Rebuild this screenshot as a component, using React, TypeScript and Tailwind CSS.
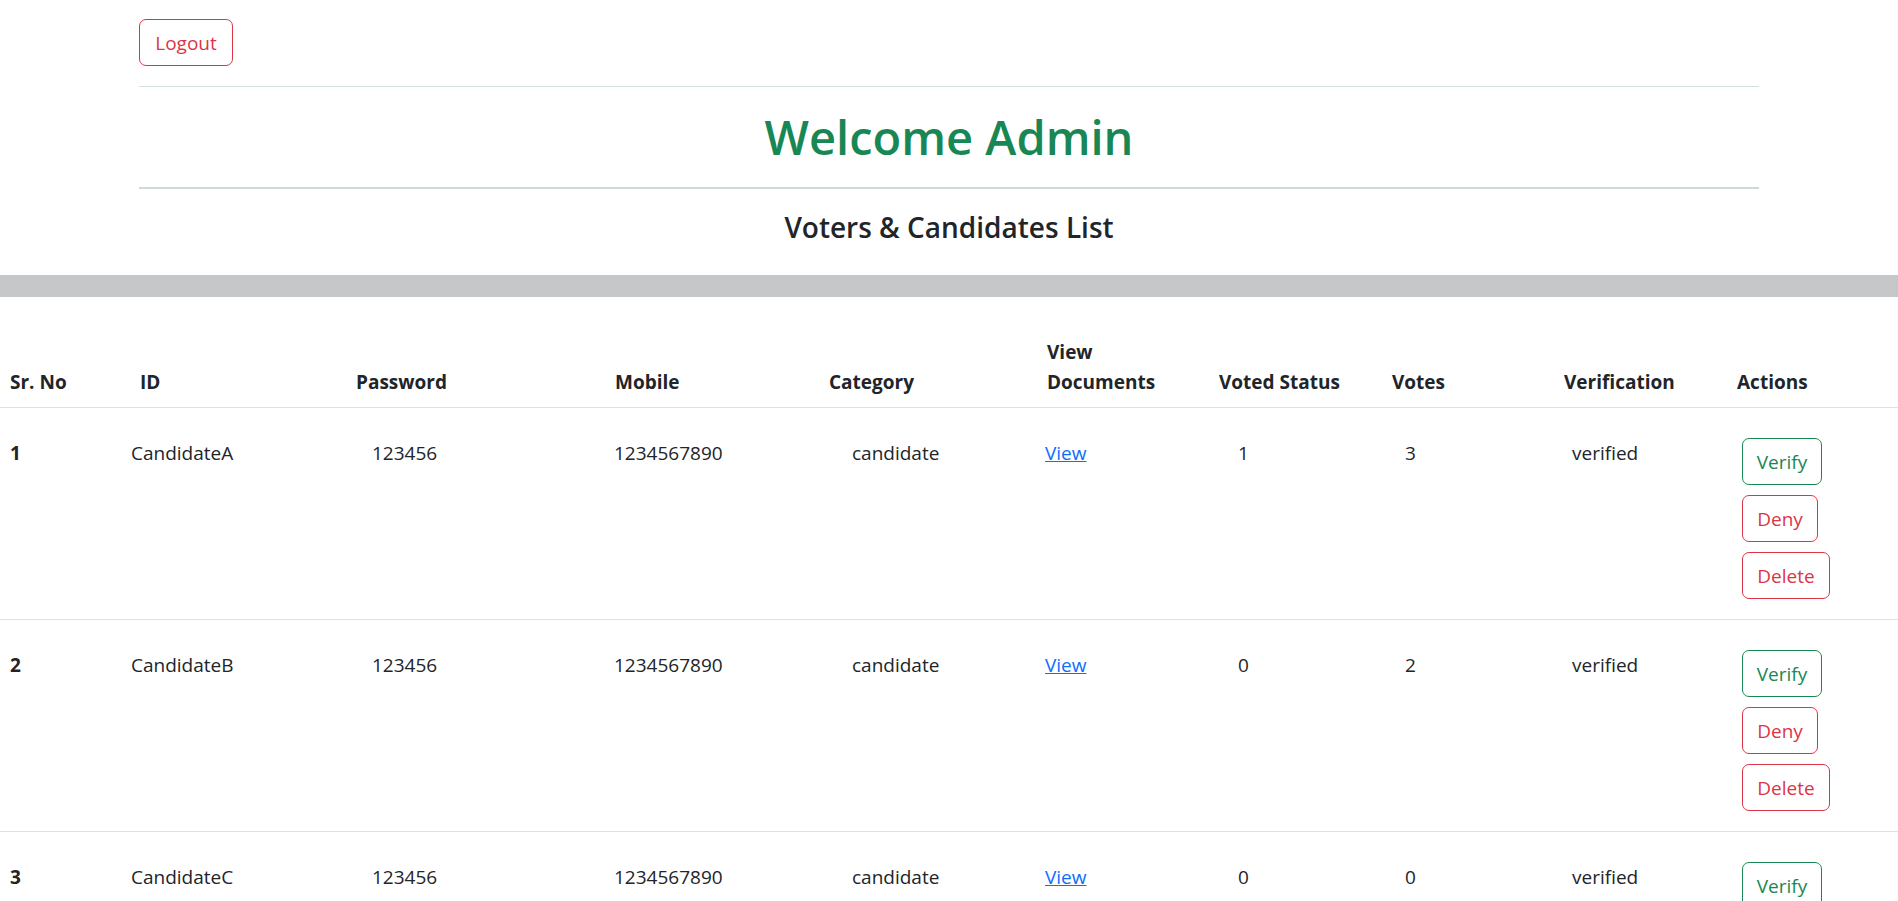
import React from "react";

const rows = [
  { n: 1, id: "CandidateA", voted: "1", votes: "3" },
  { n: 2, id: "CandidateB", voted: "0", votes: "2" },
  { n: 3, id: "CandidateC", voted: "0", votes: "0" },
];

const headCols = "grid-cols-[130px_216px_259px_214px_218px_172px_173px_172px_173px_1fr]";
const bodyCols = "grid-cols-[121px_241px_242px_238px_193px_193px_167px_167px_170px_1fr]";

export default function App() {
  return (
    <div
      className="min-h-screen bg-white text-[#212529] text-[19px] leading-[30px]"
      style={{ fontFamily: '"Open Sans", "Noto Sans", sans-serif' }}
    >
      <div className="mx-auto w-[1650px] px-[15px] pt-[19px]">
        <button className="h-[47px] w-[94px] rounded-[7px] border border-[#dc3545] text-[19px] text-[#dc3545]">
          Logout
        </button>
        <div className="mt-[20px] h-px bg-[#d3e3dc]" />
        <h1 className="mt-[20px] h-[60px] text-center text-[47px] leading-[60px] font-semibold text-[#198754]">
          Welcome Admin
        </h1>
        <div className="mt-[20px] h-[2px] bg-[#c8ddd4]" />
        <h4 className="mt-[20px] h-[36px] text-center text-[28px] leading-[36px] font-semibold">
          Voters &amp; Candidates List
        </h4>
      </div>
      <div className="mt-[30px] h-[22px] bg-[#c6c7c9]" />
      <div className="mt-[30px]">
        <div className={`grid ${headCols} items-end border-b border-[#dee2e6] font-bold`}>
          <div className="px-[10px] py-[10px]">Sr. No</div>
          <div className="px-[10px] py-[10px]">ID</div>
          <div className="px-[10px] py-[10px]">Password</div>
          <div className="px-[10px] py-[10px]">Mobile</div>
          <div className="px-[10px] py-[10px]">Category</div>
          <div className="px-[10px] py-[10px]">
            View
            <br />
            Documents
          </div>
          <div className="px-[10px] py-[10px]">Voted Status</div>
          <div className="px-[10px] py-[10px]">Votes</div>
          <div className="px-[10px] py-[10px]">Verification</div>
          <div className="px-[10px] py-[10px]">Actions</div>
        </div>
        {rows.map((r) => (
          <div
            key={r.n}
            className={`grid ${bodyCols} items-start border-b border-[#dee2e6] pt-[30px] pb-[20px]`}
          >
            <div className="px-[10px] font-bold">{r.n}</div>
            <div className="px-[10px]">{r.id}</div>
            <div className="px-[10px]">123456</div>
            <div className="px-[10px]">1234567890</div>
            <div className="px-[10px]">candidate</div>
            <div className="px-[10px]">
              <a href="#" className="text-[#0d6efd] underline">
                View
              </a>
            </div>
            <div className="px-[10px]">{r.voted}</div>
            <div className="px-[10px]">{r.votes}</div>
            <div className="px-[10px]">verified</div>
            <div className="flex flex-col items-start gap-[10px] px-[10px]">
              <button className="h-[47px] w-[80px] rounded-[7px] border border-[#198754] text-[19px] text-[#198754]">
                Verify
              </button>
              <button className="h-[47px] w-[76px] rounded-[7px] border border-[#dc3545] text-[19px] text-[#dc3545]">
                Deny
              </button>
              <button className="h-[47px] w-[88px] rounded-[7px] border border-[#dc3545] text-[19px] text-[#dc3545]">
                Delete
              </button>
            </div>
          </div>
        ))}
      </div>
    </div>
  );
}
